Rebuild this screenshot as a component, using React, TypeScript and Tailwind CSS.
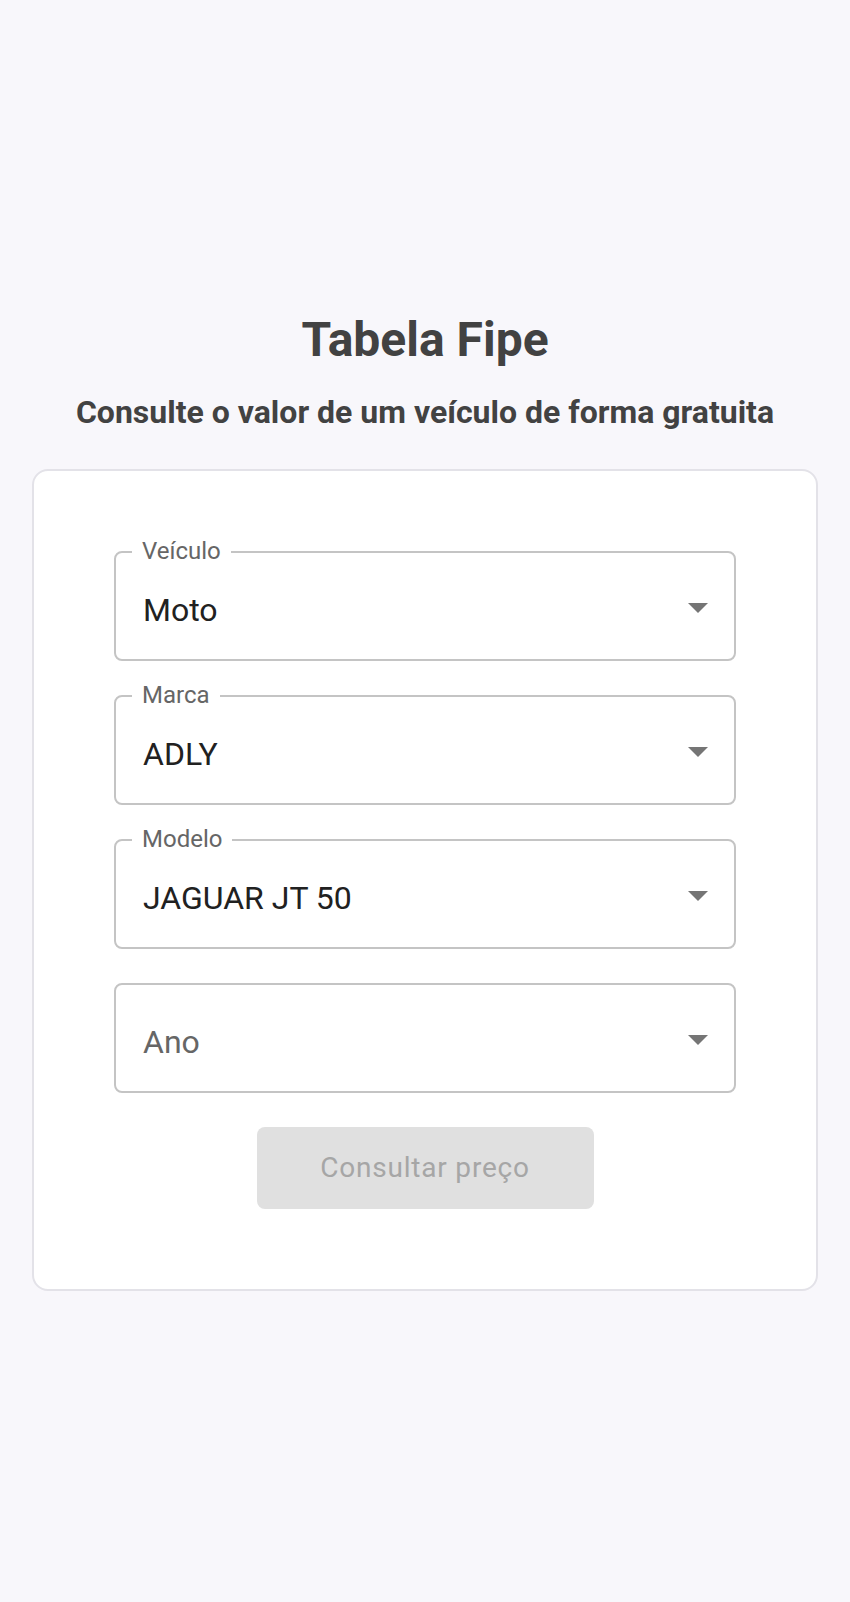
import React from "react";

function Arrow() {
  return (
    <svg width="20" height="10" viewBox="0 0 20 10" className="shrink-0 mt-[4px]">
      <path d="M0 0 L20 0 L10 10 Z" fill="#757575" />
    </svg>
  );
}

function Field({ label, value }: { label?: string; value: string }) {
  return (
    <div className="relative h-[110px] w-full rounded-[8px] border-2 border-[#c4c4c4] bg-white flex items-center pl-[27px] pr-[26px]">
      {label && (
        <span className="absolute left-[16px] top-[-18px] bg-white px-[10px] text-[24px] leading-[32px] text-[#666666]">
          {label}
        </span>
      )}
      <span
        className={
          "flex-1 pt-[8px] text-[32px] leading-[46px] " +
          (label ? "text-[#212121]" : "text-[#666666]")
        }
      >
        {value}
      </span>
      <Arrow />
    </div>
  );
}

export default function App() {
  return (
    <div
      className="min-h-screen w-full bg-[#f8f7fb] flex flex-col justify-center px-8"
      style={{ fontFamily: "Roboto, 'Noto Sans', sans-serif" }}
    >
      <h1 className="text-center text-[48px] leading-[56px] font-bold text-[#424242]">
        Tabela Fipe
      </h1>
      <h2 className="mt-[24px] text-center text-[32px] leading-[40px] font-bold text-[#424242]">
        Consulte o valor de um veículo de forma gratuita
      </h2>
      <div className="mt-[37px] rounded-[16px] border-2 border-[#e3e2e8] bg-white p-20 flex flex-col items-center gap-[34px]">
        <Field label="Veículo" value="Moto" />
        <Field label="Marca" value="ADLY" />
        <Field label="Modelo" value="JAGUAR JT 50" />
        <Field value="Ano" />
        <button
          disabled
          className="h-[82px] w-[337px] rounded-[8px] bg-[#e0e0e0] text-[28px] tracking-[0.8px] text-[#a6a6a6]"
        >
          Consultar preço
        </button>
      </div>
    </div>
  );
}
